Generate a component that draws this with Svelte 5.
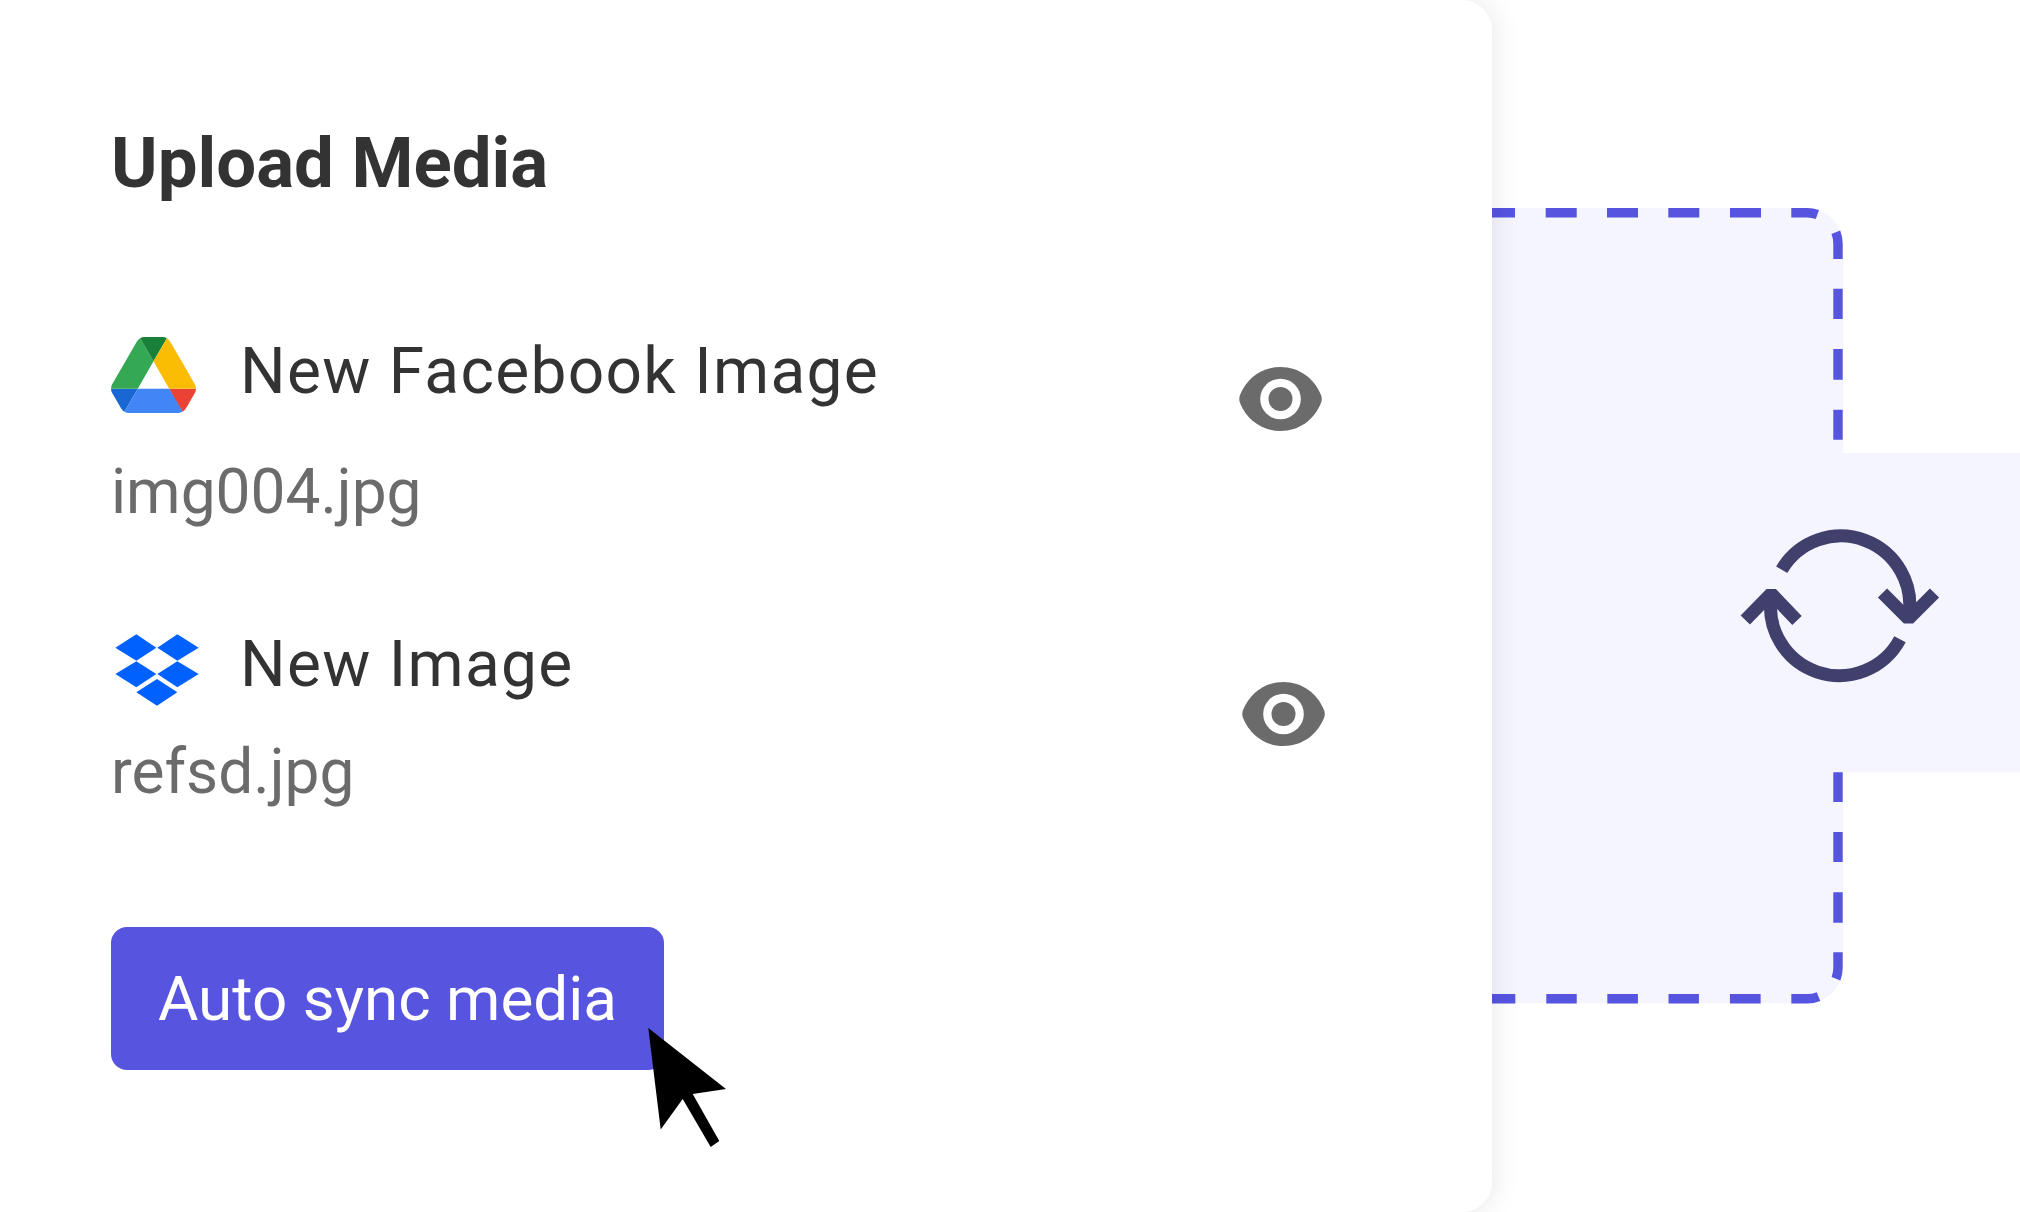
<script>
  const dash = (ranges) => {
    const parts = [];
    for (let i = 0; i < ranges.length; i++) {
      const [a, b] = ranges[i];
      const next = i + 1 < ranges.length ? ranges[i + 1][0] : b + 2000;
      parts.push((b - a).toFixed(1), (next - b).toFixed(1));
    }
    return parts.join(' ');
  };
  const topDash = dash([[0,23],[53.7,84.7],[115,146],[176.3,207.3],[238,269],[299.3,325.6],[351.9,379],[408.7,439],[469,499.7],[529.7,559.7]]);
  const botDash = dash([[0,29.7],[59.7,89.7],[120,150.4],[180,206.7],[232.3,259.8],[290.5,321.2],[352.2,382.6],[413.2,443.8],[474.4,504.8],[535.8,559.2]]);
</script>

{#snippet eye()}
  <svg class="eye" viewBox="0 0 83 64" aria-hidden="true">
    <path d="M1 28C8 11 23 0 41.5 0S75 11 82 28Q83.5 32 82 36C75 53 60 64 41.5 64S8 53 1 36Q-.5 32 1 28Z" fill="#6b6b6b"/>
    <circle cx="41.5" cy="32" r="20.3" fill="#fff"/>
    <circle cx="41.5" cy="32" r="12" fill="#6b6b6b"/>
  </svg>
{/snippet}

<div class="page">
  <section class="card">
    <h1>Upload Media</h1>

    <div class="item first">
      <div class="info">
        <div class="head">
          <svg class="drive" viewBox="0 0 87.3 78" aria-hidden="true">
            <path d="m6.6 66.85 3.85 6.65c.8 1.4 1.95 2.5 3.3 3.3l13.75-23.8h-27.5c0 1.55.4 3.1 1.2 4.5z" fill="#1967d2"/>
            <path d="m43.65 25-13.75-23.8c-1.35.8-2.5 1.9-3.3 3.3l-25.4 44a9.06 9.06 0 0 0-1.2 4.5h27.5z" fill="#34a853"/>
            <path d="m73.55 76.8c1.35-.8 2.5-1.9 3.3-3.3l1.6-2.75 7.65-13.25c.8-1.4 1.2-2.95 1.2-4.5h-27.502l5.852 11.5z" fill="#ea4335"/>
            <path d="m43.65 25 13.75-23.8c-1.35-.8-2.9-1.2-4.5-1.2h-18.5c-1.6 0-3.15.45-4.5 1.2z" fill="#188038"/>
            <path d="m59.8 53h-32.3l-13.75 23.8c1.35.8 2.9 1.2 4.5 1.2h50.8c1.6 0 3.15-.45 4.5-1.2z" fill="#4285f4"/>
            <path d="m73.4 26.5-12.7-22c-.8-1.4-1.95-2.5-3.3-3.3l-13.75 23.8 16.15 28h27.45c0-1.55-.4-3.1-1.2-4.5z" fill="#fbbc04"/>
          </svg>
          <span class="name">New Facebook Image</span>
        </div>
        <div class="file">img004.jpg</div>
      </div>
      {@render eye()}
    </div>

    <div class="item second">
      <div class="info">
        <div class="head">
          <svg class="dropbox" viewBox="77 43 250 216" aria-hidden="true">
            <g fill="#0061ff">
              <path d="M140 44 200 84 140 123 77 84Z"/>
              <path d="M263 44 327 84 263 123 203 84Z"/>
              <path d="M140 125 200 163 140 203 77 163Z"/>
              <path d="M263 125 327 163 263 203 203 163Z"/>
              <path d="M202 178 263 218 202 258 140 218Z"/>
            </g>
          </svg>
          <span class="name">New Image</span>
        </div>
        <div class="file">refsd.jpg</div>
      </div>
      {@render eye()}
    </div>

    <button class="sync" type="button">Auto sync media</button>

    <svg class="cursor" viewBox="0 0 80 121" aria-hidden="true">
      <path d="M0.3 1 78 62 44.7 67 71.3 114 62.7 120 34.7 72 12.7 102.5Z" fill="#000"/>
    </svg>
  </section>

  <aside class="side">
    <svg viewBox="0 0 528 1212" width="528" height="1212" aria-hidden="true">
      <path d="M0 208H315A36 36 0 0 1 351 244V453H528V772.3H351V967.3A36 36 0 0 1 315 1003.3H0Z" fill="#f5f5ff"/>
      <g fill="none" stroke="#5754e0" stroke-width="9.4">
        <path d="M0 212.7H315A31 31 0 0 1 346 243.7V453" stroke-dasharray={topDash}/>
        <path d="M346 772.3V967.8A31 31 0 0 1 315 998.8H0" stroke-dasharray={botDash}/>
      </g>
      <g fill="none" stroke="#413f6b" stroke-width="13" stroke-linejoin="bevel">
        <path d="M289.7 569.7A68.8 68.8 0 0 1 416.6 617"/>
        <path d="M390.5 593 416.5 619 442.5 593"/>
        <path d="M408 639.3A68.8 68.8 0 0 1 279.4 596"/>
        <path d="M253.3 620 279.2 593.5 305 620.5"/>
      </g>
    </svg>
  </aside>
</div>

<style>
  :global(body) { margin: 0; background: #fff; }
  .page {
    display: flex;
    width: 2020px;
    height: 1212px;
    overflow: hidden;
    font-family: Roboto, "Liberation Sans", sans-serif;
  }
  .card {
    position: relative;
    z-index: 1;
    box-sizing: border-box;
    flex: 0 0 1492px;
    height: 1212px;
    padding: 121px 0 0 111px;
    background: #fff;
    border-radius: 0 30px 30px 0;
    box-shadow: 0 0 30px rgba(0, 0, 0, 0.1);
  }
  h1 {
    margin: 0;
    font-size: 70.8px;
    line-height: 84px;
    font-weight: 700;
    color: #333;
  }
  .item {
    display: grid;
    grid-template-columns: 1128px 83px;
    align-items: start;
  }
  .first { margin-top: 127px; }
  .first .eye { margin-top: 35px; }
  .first .file { margin-top: 40px; }
  .second { margin-top: 93px; }
  .second .eye { margin: 57px 0 0 3px; }
  .second .file { margin-top: 27px; }
  .head {
    display: grid;
    grid-template-columns: 129px 1fr;
    align-items: start;
    height: 80px;
  }
  .drive { width: 85px; height: 76px; margin-top: 5px; }
  .dropbox { width: 84px; height: 72px; margin: 9px 0 0 4px; }
  .eye { display: block; width: 83px; height: 64px; }
  .name {
    font-size: 64px;
    line-height: 80px;
    letter-spacing: 1.3px;
    color: #333;
  }
  .file {
    font-size: 62.2px;
    line-height: 80px;
    color: #6b6b6b;
  }
  .sync {
    display: block;
    margin-top: 115px;
    width: 553px;
    height: 143px;
    padding: 0;
    border: 0;
    border-radius: 16px;
    background: #5754e0;
    color: #fff;
    font: inherit;
    font-size: 62px;
  }
  .cursor {
    position: absolute;
    left: 648px;
    top: 1027px;
    width: 80px;
    height: 121px;
  }
  .side { flex: 0 0 528px; height: 1212px; }
  .side svg { display: block; }
</style>
